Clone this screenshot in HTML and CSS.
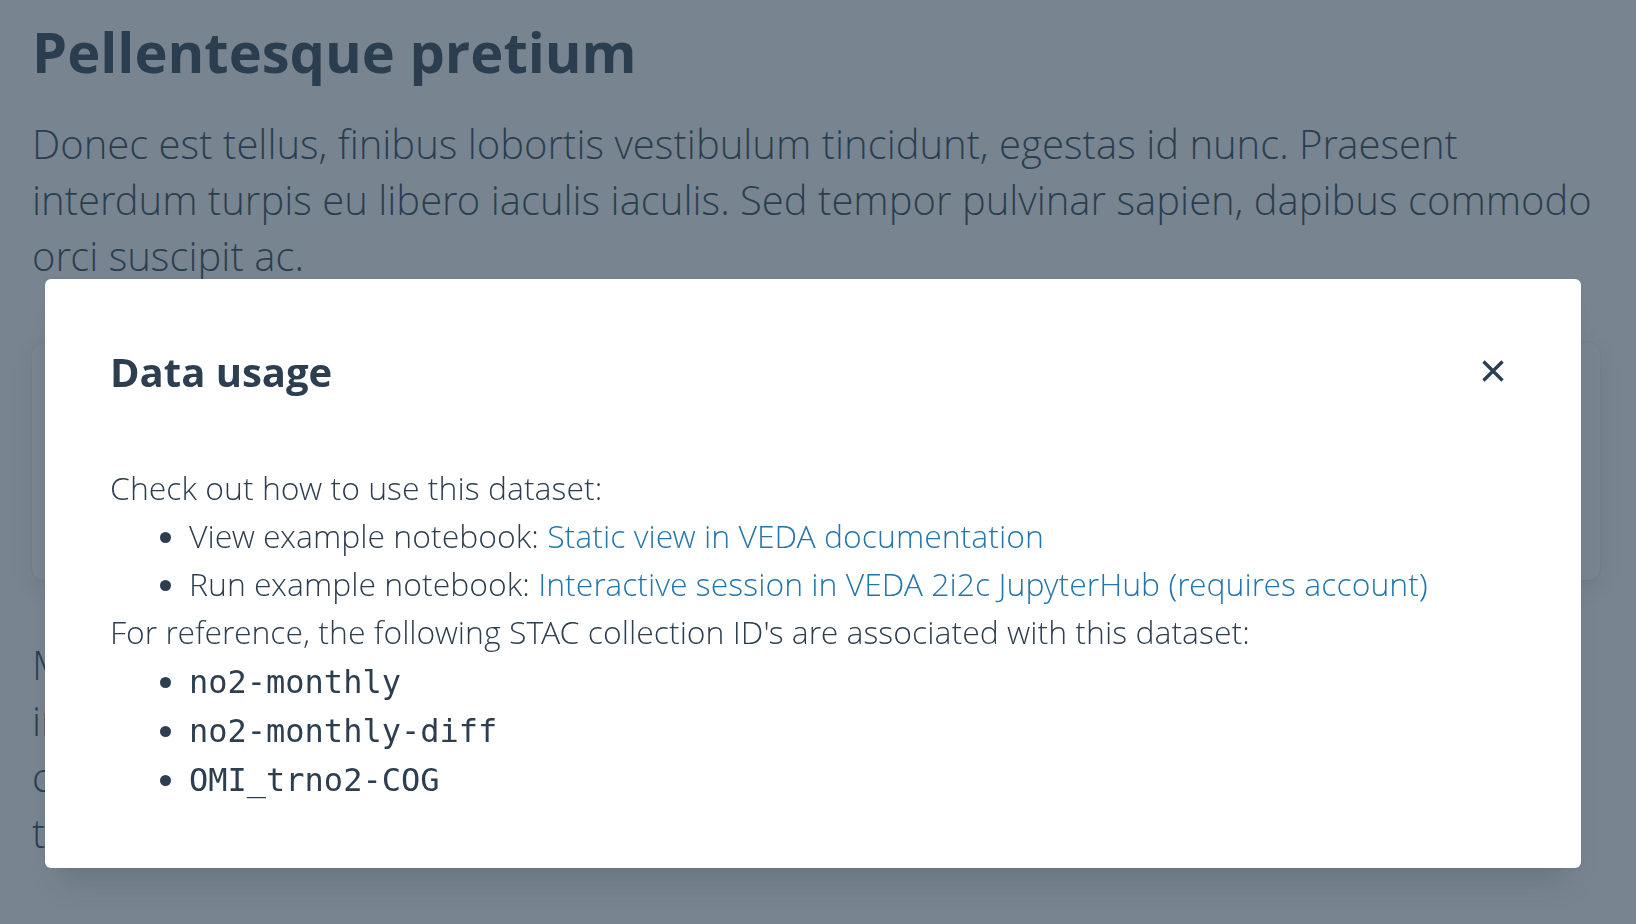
FILE: index.html
```html
<!DOCTYPE html>
<html lang="en">
<head>
<meta charset="utf-8">
<title>Data usage</title>
<link rel="stylesheet" href="styles.css">
</head>
<body>
<main class="page">
  <h1 class="page-title">Pellentesque pretium</h1>
  <p class="lead">Donec est tellus, finibus lobortis vestibulum tincidunt, egestas id nunc. Praesent interdum turpis eu libero iaculis iaculis. Sed tempor pulvinar sapien, dapibus commodo orci suscipit ac.</p>
  <section class="card"></section>
  <p class="lead">Maecenas sit amet ligula id massa vehicula fermentum, ut sed nulla quisque nec. imperdiet eget lectus dignissim, vivamus porttitor lacus at nibh pulvinar vitae sapien consectetur turpis elementum. Nulla facilisi. Aliquam erat volutpat, cras faucibus ac tincidunt dolor vel mauris tempor.</p>
</main>

<div class="overlay">
  <div class="modal" role="dialog" aria-labelledby="modal-title">
    <header class="modal-header">
      <h2 class="modal-title" id="modal-title">Data usage</h2>
      <button class="modal-close" type="button" aria-label="Close">
        <svg width="22" height="22" viewBox="0 0 22 22" aria-hidden="true">
          <path d="M1.5 1.5 L20.5 20.5 M20.5 1.5 L1.5 20.5" stroke="#2c3e50" stroke-width="3.4" stroke-linecap="butt" fill="none"/>
        </svg>
      </button>
    </header>
    <div class="modal-body">
      <p>Check out how to use this dataset:</p>
      <ul class="list">
        <li>View example notebook: <a href="#">Static view in VEDA documentation</a></li>
        <li>Run example notebook: <a href="#">Interactive session in VEDA 2i2c JupyterHub (requires account)</a></li>
      </ul>
      <p>For reference, the following STAC collection ID's are associated with this dataset:</p>
      <ul class="list list-code">
        <li><code>no2-monthly</code></li>
        <li><code>no2-monthly-diff</code></li>
        <li><code>OMI_trno2-COG</code></li>
      </ul>
    </div>
  </div>
</div>
</body>
</html>
```

FILE: styles.css
```css
html, body {
  margin: 0;
  padding: 0;
  height: 100%;
  overflow: hidden;
}

body {
  background: #ffffff;
  color: #2c3e50;
  font-family: "Open Sans", "Noto Sans", sans-serif;
}

.page {
  padding: 16px 32px;
}

.page-title {
  margin: 0;
  font-size: 56px;
  line-height: 70px;
  font-weight: 700;
}

.lead {
  margin: 30px 0 0;
  font-family: "Open Sans Light", "Open Sans", "Noto Sans", sans-serif;
  font-size: 40px;
  line-height: 56px;
  font-weight: 300;
}

.card {
  margin-top: 59px;
  height: 237px;
  width: 1568px;
  background: #ffffff;
  border-radius: 12px;
  box-shadow: 0 0 0 1px rgba(44, 62, 80, 0.04), 0 8px 24px rgba(44, 62, 80, 0.14);
}

.card + .lead {
  margin-top: 57px;
}

.overlay {
  position: fixed;
  inset: 0;
  background: rgba(44, 62, 80, 0.64);
  padding: 279px 0 0 45px;
  box-sizing: border-box;
}

.modal {
  width: 1536px;
  box-sizing: border-box;
  background: #ffffff;
  border-radius: 6px;
  padding: 65px 65px 65px;
  box-shadow: 0 0 4px rgba(44, 62, 80, 0.08), 0 28px 28px -16px rgba(44, 62, 80, 0.22);
}

.modal-header {
  display: flex;
  align-items: center;
  justify-content: space-between;
  height: 56px;
}

.modal-title {
  margin: 0;
  font-size: 40px;
  line-height: 56px;
  font-weight: 700;
}

.modal-close {
  width: 46px;
  height: 46px;
  margin-top: -3px;
  padding: 0;
  border: 0;
  background: transparent;
  display: flex;
  align-items: center;
  justify-content: center;
  cursor: pointer;
}

.modal-body {
  padding-top: 64px;
  font-family: "Open Sans Light", "Open Sans", "Noto Sans", sans-serif;
  font-size: 32px;
  line-height: 48px;
  font-weight: 300;
}

.modal-body p {
  margin: 0;
}

.list {
  margin: 0;
  padding-left: 79px;
}

.list a {
  color: #2276ac;
  text-decoration: none;
}

.list-code li {
  line-height: 49px;
}

.list-code code {
  font-family: "DejaVu Sans Mono", "Liberation Mono", monospace;
  font-size: 32px;
  line-height: 1;
  font-weight: 400;
}
```
